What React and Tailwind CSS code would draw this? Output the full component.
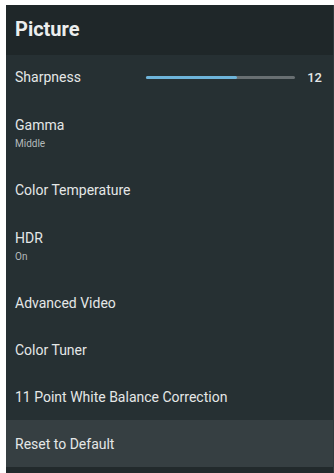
import React from 'react';

const rows = [
    { label: 'Gamma', sub: 'Middle' },
    { label: 'Color Temperature' },
    { label: 'HDR', sub: 'On' },
    { label: 'Advanced Video' },
    { label: 'Color Tuner' },
    { label: '11 Point White Balance Correction' },
]

function Row({ label, sub, active }) {
    return (
        <div
            className={
                'flex flex-col justify-center pl-[9px] ' +
                (sub ? 'h-[66px] ' : 'h-[47px] ') +
                (active ? 'bg-[#363f42]' : '')
            }
        >
            <span className="text-[14px] leading-[18px] text-[#e4e7e7]">{label}</span>
            {sub && <span className="text-[10px] leading-[14px] mt-[3px] text-[#b4babb]">{sub}</span>}
        </div>
    )
}

export default function App() {
    return (
        <div className="w-[334px] h-[473px] bg-white pl-[6px] pt-[5px]" style={{ fontFamily: 'Roboto, "Liberation Sans", sans-serif' }}>
            <div className="h-full flex flex-col bg-[#263033] border-r border-[#30393c]">
                {/* Header */}
                <div className="h-[50px] flex-shrink-0 bg-[#1f2729] flex items-center pl-[9px]">
                    <h1 className="text-[20px] font-bold text-[#eceeee] leading-none pb-[2px]">Picture</h1>
                </div>

                {/* Sharpness slider row */}
                <div className="h-[45px] flex-shrink-0 flex items-center pl-[9px] pr-[11px]">
                    <span className="text-[14px] text-[#e4e7e7] w-[131px]">Sharpness</span>
                    <div className="relative w-[149px] h-[3px] bg-[#686f72] rounded-full">
                        <div className="h-full w-[61%] bg-[#6db4da] rounded-full" />
                    </div>
                    <span className="ml-auto text-[13px] font-medium text-[#e4e7e7]">12</span>
                </div>

                {rows.map(r => (
                    <Row key={r.label} label={r.label} sub={r.sub} />
                ))}

                <Row label="Reset to Default" active />
                <div className="flex-1 bg-[#222a2c]" />
            </div>
        </div>
    )
}
